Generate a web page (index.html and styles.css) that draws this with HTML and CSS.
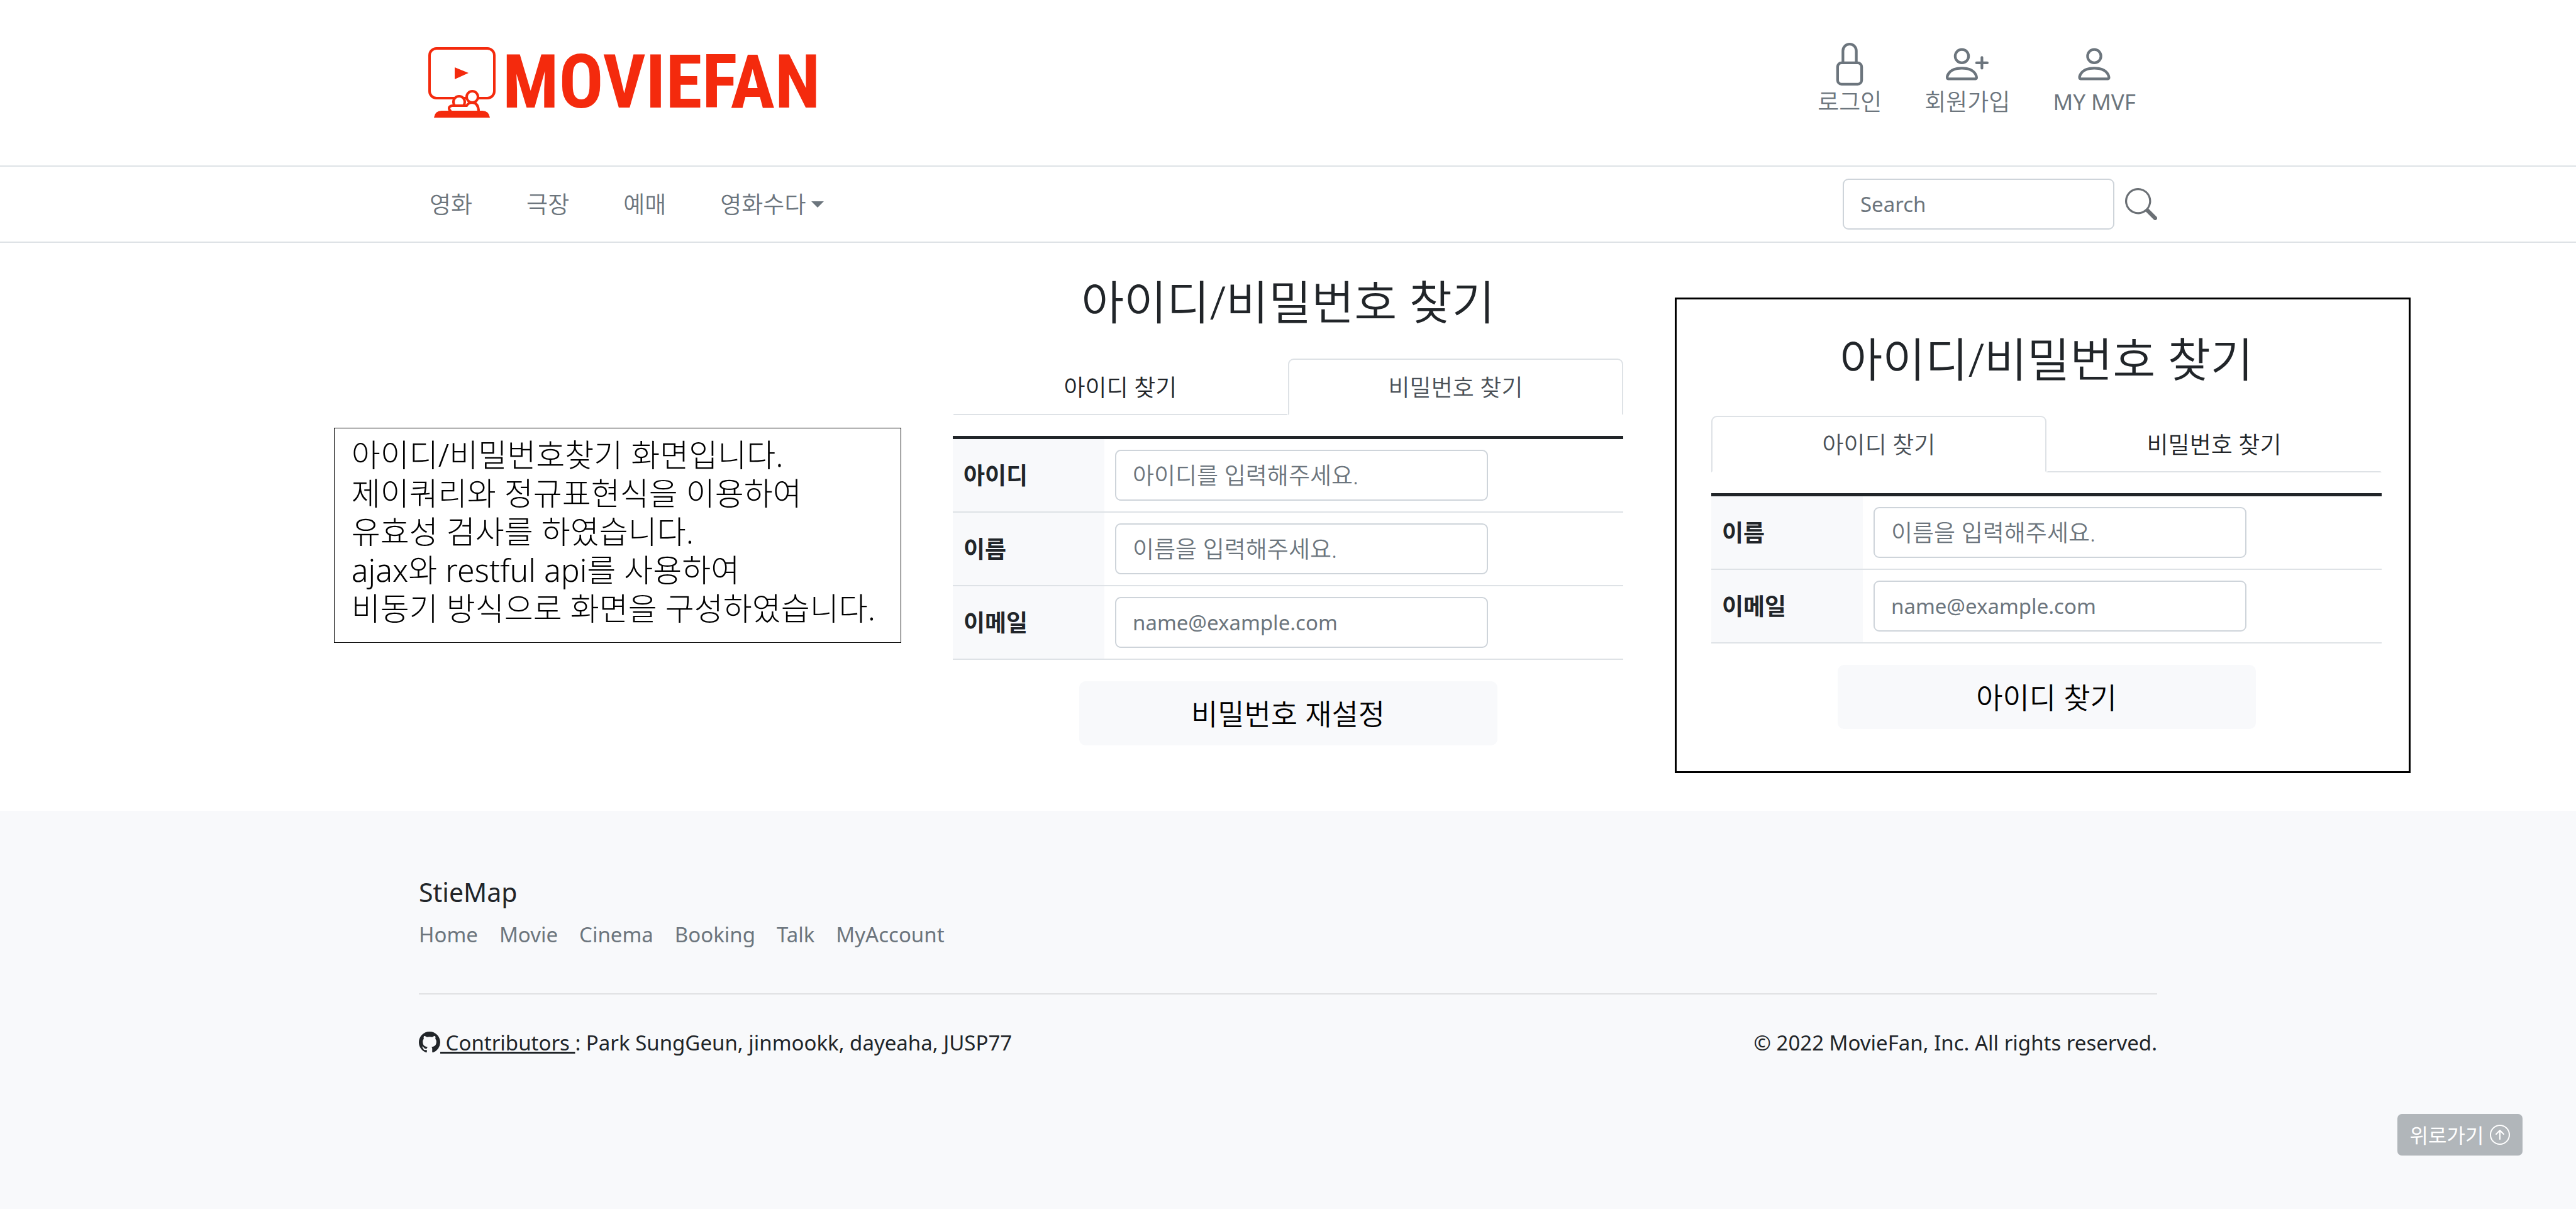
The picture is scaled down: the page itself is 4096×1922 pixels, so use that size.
FILE: index.html
```html
<!DOCTYPE html>
<html lang="ko">
<head>
  <meta charset="utf-8">
  <meta name="viewport" content="width=device-width, initial-scale=1">
  <title>MovieFan - 아이디/비밀번호 찾기</title>
  <link rel="stylesheet" href="styles.css">
</head>
<body>
  <header class="top">
    <div class="container top-inner">
      <a class="logo" href="#">
        <svg class="logo-mark" viewBox="0 0 107 112" aria-hidden="true">
          <rect class="logo-line" x="2" y="2" width="103" height="79" rx="11"/>
          <path class="logo-fill" d="M42 32 64 41 42 51z"/>
          <circle class="logo-line" cx="49" cy="87" r="9"/>
          <path class="logo-line" d="M36 102Q33 100 33 97T38 93H61Q64 88 70 88 80 89 80 102"/>
          <circle class="logo-line" cx="70" cy="79" r="9"/>
          <path class="logo-fill" d="M9 112Q11 101 21 101H86Q96 101 98 112z"/>
        </svg>
        <span class="logo-text">MOVIEFAN</span>
      </a>
      <nav class="account" aria-label="계정">
        <a class="account-link" href="#">
          <svg class="icon-lg" viewBox="0 0 16 16" aria-hidden="true"><path d="M8 1a2 2 0 0 1 2 2v4H6V3a2 2 0 0 1 2-2zm3 6V3a3 3 0 0 0-6 0v4a2 2 0 0 0-2 2v5a2 2 0 0 0 2 2h6a2 2 0 0 0 2-2V9a2 2 0 0 0-2-2zM5 8h6a1 1 0 0 1 1 1v5a1 1 0 0 1-1 1H5a1 1 0 0 1-1-1V9a1 1 0 0 1 1-1z"/></svg>
          <span>로그인</span>
        </a>
        <a class="account-link" href="#">
          <svg class="icon-lg" viewBox="0 0 16 16" aria-hidden="true"><path d="M6 8a3 3 0 1 0 0-6 3 3 0 0 0 0 6zm2-3a2 2 0 1 1-4 0 2 2 0 0 1 4 0zm4 8c0 1-1 1-1 1H1s-1 0-1-1 1-4 6-4 6 3 6 4zm-1-.004c-.001-.246-.154-.986-.832-1.664C9.516 10.68 8.289 10 6 10c-2.29 0-3.516.68-4.168 1.332-.678.678-.83 1.418-.832 1.664h10z"/><path d="M13.500 5a.5.5 0 0 1 .5.5V7h1.500a.5.5 0 0 1 0 1H14v1.500a.5.5 0 0 1-1 0V8h-1.500a.5.5 0 0 1 0-1H13V5.500a.5.5 0 0 1 .5-.5z"/></svg>
          <span>회원가입</span>
        </a>
        <a class="account-link account-link-latin" href="#">
          <svg class="icon-lg" viewBox="0 0 16 16" aria-hidden="true"><path d="M8 8a3 3 0 1 0 0-6 3 3 0 0 0 0 6zm2-3a2 2 0 1 1-4 0 2 2 0 0 1 4 0zm4 8c0 1-1 1-1 1H3s-1 0-1-1 1-4 6-4 6 3 6 4zm-1-.004c-.001-.246-.154-.986-.832-1.664C11.516 10.68 10.289 10 8 10c-2.29 0-3.516.68-4.168 1.332-.678.678-.83 1.418-.832 1.664h10z"/></svg>
          <span>MY MVF</span>
        </a>
      </nav>
    </div>
  </header>

  <div class="menu-bar">
    <div class="container menu-inner">
      <nav class="menu" aria-label="메뉴">
        <a href="#">영화</a>
        <a href="#">극장</a>
        <a href="#">예매</a>
        <a class="has-caret" href="#">영화수다</a>
      </nav>
      <form class="search">
        <input class="field field-latin search-field" type="search" placeholder="Search" aria-label="Search">
        <button class="search-button" type="button" aria-label="검색">
          <svg class="icon-md" viewBox="0 0 16 16" aria-hidden="true"><path d="M11.742 10.344a6.500 6.500 0 1 0-1.397 1.398h-.001c.03.04.062.078.098.115l3.850 3.850a1 1 0 0 0 1.415-1.414l-3.850-3.850a1.007 1.007 0 0 0-.115-.1zM12 6.500a5.500 5.500 0 1 1-11 0 5.500 5.500 0 0 1 11 0z"/></svg>
        </button>
      </form>
    </div>
  </div>

  <main class="stage">
    <p class="note">아이디/비밀번호찾기 화면입니다.<br>제이쿼리와 정규표현식을 이용하여<br>유효성 검사를 하였습니다.<br>ajax와 restful api를 사용하여<br>비동기 방식으로 화면을 구성하였습니다.</p>

    <section class="finder">
      <h1 class="title">아이디/비밀번호 찾기</h1>
      <div class="tabs" role="tablist">
        <button class="tab" type="button" role="tab" aria-selected="false">아이디 찾기</button>
        <button class="tab tab-active" type="button" role="tab" aria-selected="true">비밀번호 찾기</button>
      </div>
      <form>
        <table class="fields">
          <tr>
            <th scope="row"><label for="pw-id">아이디</label></th>
            <td><input class="field" id="pw-id" type="text" placeholder="아이디를 입력해주세요."></td>
          </tr>
          <tr>
            <th scope="row"><label for="pw-name">이름</label></th>
            <td><input class="field" id="pw-name" type="text" placeholder="이름을 입력해주세요."></td>
          </tr>
          <tr>
            <th scope="row"><label for="pw-email">이메일</label></th>
            <td><input class="field field-latin" id="pw-email" type="email" placeholder="name@example.com"></td>
          </tr>
        </table>
        <button class="submit" type="button">비밀번호 재설정</button>
      </form>
    </section>

    <section class="finder finder-card">
      <h2 class="title">아이디/비밀번호 찾기</h2>
      <div class="tabs" role="tablist">
        <button class="tab tab-active" type="button" role="tab" aria-selected="true">아이디 찾기</button>
        <button class="tab" type="button" role="tab" aria-selected="false">비밀번호 찾기</button>
      </div>
      <form>
        <table class="fields">
          <tr>
            <th scope="row"><label for="id-name">이름</label></th>
            <td><input class="field" id="id-name" type="text" placeholder="이름을 입력해주세요."></td>
          </tr>
          <tr>
            <th scope="row"><label for="id-email">이메일</label></th>
            <td><input class="field field-latin" id="id-email" type="email" placeholder="name@example.com"></td>
          </tr>
        </table>
        <button class="submit" type="button">아이디 찾기</button>
      </form>
    </section>
  </main>

  <footer class="footer">
    <div class="container">
      <h5 class="footer-title">StieMap</h5>
      <nav class="footer-links" aria-label="StieMap">
        <a href="#">Home</a>
        <a href="#">Movie</a>
        <a href="#">Cinema</a>
        <a href="#">Booking</a>
        <a href="#">Talk</a>
        <a href="#">MyAccount</a>
      </nav>
      <div class="footer-bottom">
        <p><a class="contributors" href="#"><svg class="icon-sm" viewBox="0 0 16 16" aria-hidden="true"><path d="M8 0C3.580 0 0 3.580 0 8c0 3.540 2.290 6.530 5.470 7.590.4.07.55-.17.55-.38 0-.19-.01-.82-.01-1.490-2.010.37-2.530-.49-2.690-.94-.09-.23-.48-.94-.82-1.130-.28-.15-.68-.52-.01-.53.63-.01 1.080.58 1.230.82.72 1.210 1.870.87 2.330.66.07-.52.28-.87.51-1.070-1.780-.2-3.640-.89-3.640-3.950 0-.87.31-1.590.82-2.150-.08-.2-.36-1.020.08-2.120 0 0 .67-.21 2.200.82.64-.18 1.320-.27 2-.27.68 0 1.360.09 2 .27 1.530-1.040 2.200-.82 2.200-.82.44 1.100.16 1.920.08 2.120.51.56.82 1.270.82 2.150 0 3.070-1.870 3.750-3.650 3.950.29.25.54.73.54 1.480 0 1.070-.01 1.930-.01 2.200 0 .21.15.46.55.38A8.012 8.012 0 0 0 16 8c0-4.420-3.580-8-8-8z"/></svg>&nbsp;Contributors&nbsp;</a>: Park SungGeun, jinmookk, dayeaha, JUSP77</p>
        <p>© 2022 MovieFan, Inc. All rights reserved.</p>
      </div>
    </div>
  </footer>

  <button class="to-top" type="button">위로가기
    <svg class="icon-xs" viewBox="0 0 16 16" aria-hidden="true"><path d="M1 8a7 7 0 1 0 14 0A7 7 0 0 0 1 8zm15 0A8 8 0 1 1 0 8a8 8 0 0 1 16 0zm-7.500 3.500a.5.5 0 0 1-1 0V5.707L5.354 7.854a.5.5 0 1 1-.708-.708l3-3a.5.5 0 0 1 .708 0l3 3a.5.5 0 0 1-.708.708L8.500 5.707V11.500z"/></svg>
  </button>
</body>
</html>
```
FILE: styles.css
```css
* {
  box-sizing: border-box;
}

body {
  margin: 0;
  min-height: 100vh;
  display: flex;
  flex-direction: column;
  background: #fff;
  color: #212529;
  font-family: "Noto Sans", "Noto Sans CJK KR", sans-serif;
  font-size: 33px;
  line-height: 51px;
}

a {
  color: inherit;
  text-decoration: none;
}

p,
h1,
h2,
h5 {
  margin: 0;
}

button,
input {
  font: inherit;
  color: inherit;
}

svg {
  fill: currentColor;
}

.container {
  width: 100%;
  max-width: 2764px;
  margin: 0 auto;
}

.icon-lg {
  width: 68px;
  height: 68px;
}

.icon-md {
  display: block;
  width: 51px;
  height: 51px;
}

.icon-sm {
  width: 34px;
  height: 34px;
  vertical-align: -4px;
}

.icon-xs {
  width: 32px;
  height: 32px;
}

/* Header */

.top {
  border-bottom: 2px solid #dee2e6;
}

.top-inner {
  display: flex;
  justify-content: space-between;
  align-items: flex-start;
  padding: 68px 0 76px;
}

.logo {
  display: flex;
  gap: 11px;
  padding: 7px 0 0 15px;
  color: #f42a0d;
}

.logo-mark {
  width: 107px;
  height: 112px;
}

.logo-line {
  fill: #fff;
  stroke: currentColor;
  stroke-width: 4;
}

.logo-fill {
  fill: currentColor;
}

.logo-text {
  font-family: "Liberation Sans Narrow", "Roboto Condensed", Roboto, sans-serif;
  font-size: 118px;
  font-weight: 700;
  line-height: 112px;
}

.account {
  display: flex;
  color: #6c757d;
  font-size: 37px;
  font-weight: 350;
}

.account-link {
  display: flex;
  flex-direction: column;
  align-items: center;
  padding: 0 34px;
}

.account-link-latin {
  font-size: 35px;
  font-weight: 400;
}

/* Menu bar */

.menu-bar {
  border-bottom: 2px solid #dee2e6;
}

.menu-inner {
  display: flex;
  justify-content: space-between;
  align-items: center;
  padding: 19px 0;
}

.menu {
  display: flex;
  gap: 52px;
  color: #6c757d;
  font-size: 37px;
  font-weight: 350;
}

.menu a {
  padding: 0 17px;
}

.has-caret::after {
  content: "";
  display: inline-block;
  margin-left: 9px;
  vertical-align: 9px;
  border: 10px solid transparent;
  border-top-color: currentColor;
  border-bottom: 0;
}

.search {
  display: flex;
  align-items: center;
  gap: 17px;
}

.search-button {
  padding: 0;
  border: 0;
  background: none;
  color: #6b7075;
}

.field {
  display: block;
  width: 593px;
  height: 81px;
  padding: 0 26px;
  border: 2px solid #ced4da;
  border-radius: 9px;
  background: #fff;
  font-size: 37px;
  font-weight: 350;
}

.field::placeholder {
  color: #6c757d;
  opacity: 1;
}

.field-latin {
  font-size: 33px;
  font-weight: 400;
}

.search-field {
  width: 432px;
}

/* Main area */

.stage {
  display: grid;
  grid-template-columns: 1fr 1066px 1fr;
  column-gap: 82px;
  align-items: start;
  padding: 50px 0 60px;
}

.note {
  justify-self: end;
  margin-top: 244px;
  padding: 12px 40px 23px 27px;
  border: 1px solid #000;
  color: #000;
  font-size: 50px;
  font-weight: 300;
  line-height: 61px;
  white-space: nowrap;
}

.finder-card {
  justify-self: start;
  width: 1170px;
  margin-top: 37px;
  padding: 51px 43px 67px 55px;
  border: 3px solid #000;
}

.title {
  margin-bottom: 46px;
  font-size: 74px;
  font-weight: 350;
  line-height: 88px;
  text-align: center;
}

.tabs {
  display: flex;
  margin-bottom: 33px;
}

.tab {
  flex: 1;
  height: 90px;
  padding: 0;
  border: 2px solid transparent;
  border-bottom-color: #dee2e6;
  background: none;
  font-size: 37px;
  font-weight: 350;
}

.tab-active {
  border-color: #dee2e6;
  border-bottom-color: transparent;
  border-radius: 9px 9px 0 0;
  color: #495057;
}

.fields {
  width: 100%;
  border-collapse: separate;
  border-spacing: 0;
  border-top: 5px solid #212529;
}

.fields th,
.fields td {
  padding: 17px;
  border-bottom: 2px solid #dee2e6;
}

.fields th {
  width: 241px;
  background: #f8f9fb;
  font-size: 37px;
  font-weight: 700;
  text-align: left;
}

.submit {
  display: block;
  width: 665px;
  height: 102px;
  margin: 34px auto 0;
  border: 0;
  border-radius: 10px;
  background: #f8f9fb;
  color: #000;
  font-size: 46px;
  font-weight: 350;
}

/* Footer */

.footer {
  flex: 1;
  padding-top: 104px;
  background: #f8f9fb;
}

.footer-title {
  margin-bottom: 16px;
  font-size: 41px;
  font-weight: 400;
  line-height: 51px;
}

.footer-links {
  display: flex;
  gap: 34px;
  padding-bottom: 68px;
  border-bottom: 2px solid #e0e1e3;
  color: #6c757d;
}

.footer-bottom {
  display: flex;
  justify-content: space-between;
  padding-top: 51px;
}

.contributors {
  text-decoration: underline;
}

.to-top {
  position: fixed;
  right: 85px;
  bottom: 85px;
  display: flex;
  align-items: center;
  justify-content: center;
  gap: 10px;
  width: 199px;
  height: 66px;
  padding: 0;
  border: 0;
  border-radius: 7px;
  background: #b1b6ba;
  color: #fff;
  font-size: 32px;
}
```
